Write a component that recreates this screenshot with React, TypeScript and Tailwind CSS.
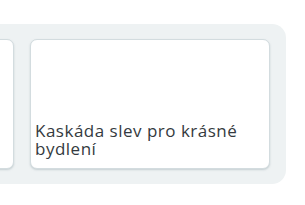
export default function App() {
  return (
    <div className="w-[305px] h-[205px] overflow-hidden bg-white pt-[24px]">
      <div className="ml-[-242px] w-[528px] h-[160px] rounded-[14px] bg-[#eef2f3] p-[15px_16px] flex gap-[16px]">
        <div className="w-[240px] h-[130px] shrink-0 rounded-[7px] bg-white border border-[#d3dcdf] shadow-[0_1px_2px_rgba(120,140,150,0.35)]" />
        <div className="w-[240px] h-[130px] shrink-0 rounded-[7px] bg-white border border-[#d3dcdf] shadow-[0_1px_2px_rgba(120,140,150,0.35)] flex flex-col justify-end px-[4px] pb-[10px]">
          <p
            className="text-[17px] leading-[18px] tracking-[0.5px] text-[#343a40]"
            style={{ fontFamily: '"Open Sans", sans-serif' }}
          >
            Kaskáda slev pro krásné bydlení
          </p>
        </div>
      </div>
    </div>
  )
}
